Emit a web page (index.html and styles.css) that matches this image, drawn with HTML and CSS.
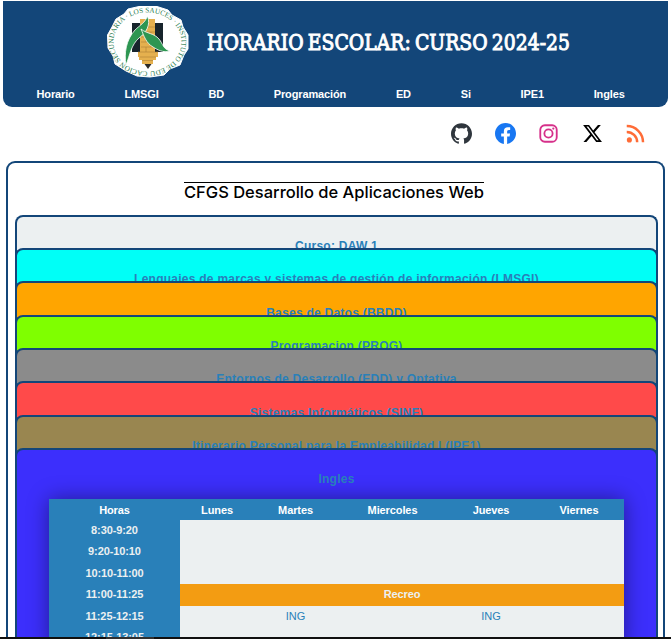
FILE: index.html
```html
<!DOCTYPE html>
<html lang="es">
<head>
<meta charset="utf-8">
<title>Horario escolar</title>
<link rel="stylesheet" href="styles.css">
</head>
<body>
<header class="header">
  <div class="brand">
    <svg class="logo" viewBox="106 5 84 73" width="84" height="73">
      <defs>
        <path id="ring" d="M147.5 71.5 A34 29.5 0 0 1 147.5 12.5 A34 29.5 0 0 1 147.5 71.5"/>
      </defs>
      <path d="M128 9 L139 6.5 L157 6.5 L168 10 L172 15 L181 20 L183 27 L188 35 L188 49 L184 55 L180 65 L170 69 L164 75 L150 77 L137 76 L126 71 L115 64 L113 56 L108 48 L107.500 35 L112 27 L116 19 L124 14Z" fill="#fff" stroke="#fff" stroke-linejoin="round"/>
      <text class="ring-text"><textPath href="#ring" startOffset="0" textLength="197" lengthAdjust="spacingAndGlyphs">CACION SECUNDARIA · LOS SAUCES · INSTITUTO DE EDU</textPath></text>
      <path d="M132 23h8v29h-8zM155 23h8v29h-8z" fill="#17242c"/>
      <path d="M140 19h15v33h3v5h-20v-5h2zM139 57h17v3h-17zM142 60h11v4h-11z" fill="#e5b04e"/>
      <path d="M141 27h14M141 32h14M141 37h14M141 42h14M141 47h14M138 52h20M140 57h16M142 60.500h11M148 19v8M145 27v5M151 32v5M146 37v5M151 42v5M146 47v5" stroke="#ad8236" stroke-width=".6" fill="none"/>
      <path d="M144.500 64h7l-3.500 5z" fill="#2b2926"/>
      <path d="M147.500 16C151 25 146 33 139 38C131 45 130 55 126 65C124 53 126 40 135 30C140 25 145 23 147.500 16Z" fill="#2d9652" stroke="#fff" stroke-width=".8"/>
      <path d="M141 29C147 34 154 33 159 39C163 44 163 49 170 51C163 53 158 50 153 47C146 43 144 36 141 29Z" fill="#2d9652" stroke="#fff" stroke-width=".8"/>
    </svg>
    <h1 class="title"><svg width="366" height="28"><text x="2" y="20" textLength="363" lengthAdjust="spacingAndGlyphs">HORARIO ESCOLAR: CURSO 2024-25</text></svg></h1>
  </div>
  <nav class="nav"><a>Horario</a><a>LMSGI</a><a>BD</a><a>Programación</a><a>ED</a><a>Si</a><a>IPE1</a><a>Ingles</a></nav>
</header>
<div class="social">
  <svg viewBox="0 0 24 24" fill="#2f363d"><path d="M12 .297c-6.630 0-12 5.373-12 12 0 5.303 3.438 9.800 8.205 11.385.6.113.820-.258.820-.577 0-.285-.010-1.040-.015-2.040-3.338.724-4.042-1.610-4.042-1.610C4.422 18.070 3.633 17.700 3.633 17.700c-1.087-.744.084-.729.084-.729 1.205.084 1.838 1.236 1.838 1.236 1.070 1.835 2.809 1.305 3.495.998.108-.776.417-1.305.760-1.605-2.665-.3-5.466-1.332-5.466-5.930 0-1.310.465-2.380 1.235-3.220-.135-.303-.540-1.523.105-3.176 0 0 1.005-.322 3.300 1.230.960-.267 1.980-.399 3-.405 1.020.006 2.040.138 3 .405 2.280-1.552 3.285-1.230 3.285-1.230.645 1.653.240 2.873.120 3.176.765.840 1.230 1.910 1.230 3.220 0 4.610-2.805 5.625-5.475 5.920.420.360.810 1.096.810 2.220 0 1.606-.015 2.896-.015 3.286 0 .315.210.690.825.570C20.565 22.092 24 17.592 24 12.297c0-6.627-5.373-12-12-12"/></svg>
  <svg viewBox="0 0 24 24" fill="#1877f2"><path d="M24 12.073c0-6.627-5.373-12-12-12s-12 5.373-12 12c0 5.990 4.388 10.954 10.125 11.854v-8.385H7.078v-3.470h3.047V9.430c0-3.007 1.792-4.669 4.533-4.669 1.312 0 2.686.235 2.686.235v2.953H15.830c-1.491 0-1.956.925-1.956 1.874v2.250h3.328l-.532 3.470h-2.796v8.385C19.612 23.027 24 18.062 24 12.073z"/></svg>
  <svg viewBox="0 0 24 24" fill="none" stroke="#d6308a" stroke-width="2.100"><rect x="2.600" y="2.600" width="18.800" height="18.800" rx="5.200"/><circle cx="12" cy="12" r="4.700"/><circle cx="17.500" cy="6.400" r="1.300" fill="#d6308a" stroke="none"/></svg>
  <svg viewBox="0 0 24 24" fill="#000"><path d="M18.244 2.250h3.308l-7.227 8.260 8.502 11.240H16.170l-5.214-6.817L4.990 21.750H1.680l7.730-8.835L1.254 2.250H8.080l4.713 6.231zm-1.161 17.520h1.833L7.084 4.126H5.117z"/></svg>
  <svg viewBox="0 0 24 24" fill="none" stroke="#ff6c37" stroke-width="2.800"><circle cx="5" cy="19.300" r="2.900" fill="#ff6c37" stroke="none"/><path d="M2 10.200A11.800 11.800 0 0 1 13.900 22M2 3.500A18.500 18.500 0 0 1 20.600 22"/></svg>
</div>
<main class="main">
  <h2 class="subtitle"><svg width="302" height="22"><text x="0" y="15" textLength="300" lengthAdjust="spacingAndGlyphs">CFGS Desarrollo de Aplicaciones Web</text></svg></h2>
  <section class="card grey-light"><h3>Curso: DAW 1</h3></section>
  <section class="card cyan"><h3>Lenguajes de marcas y sistemas de gestión de información (LMSGI)</h3></section>
  <section class="card orange"><h3>Bases de Datos (BBDD)</h3></section>
  <section class="card green"><h3>Programacion (PROG)</h3></section>
  <section class="card grey"><h3>Entornos de Desarrollo (EDD) y Optativa</h3></section>
  <section class="card red"><h3>Sistemas Informáticos (SINF)</h3></section>
  <section class="card brown"><h3>Itinerario Personal para la Empleabilidad I (IPE1)</h3></section>
  <section class="card blue">
    <h3>Ingles</h3>
    <div class="schedule">
      <div class="row head"><b>Horas</b><b>Lunes</b><b>Martes</b><b>Miercoles</b><b>Jueves</b><b>Viernes</b></div>
      <div class="row"><b>8:30-9:20</b></div>
      <div class="row"><b>9:20-10:10</b></div>
      <div class="row"><b>10:10-11:00</b></div>
      <div class="row"><b>11:00-11:25</b><b class="break">Recreo</b></div>
      <div class="row"><b>11:25-12:15</b><span></span><span>ING</span><span></span><span>ING</span><span></span></div>
      <div class="row"><b>12:15-13:05</b></div>
    </div>
  </section>
</main>
<footer class="edge"><i></i></footer>
</body>
</html>
```
FILE: styles.css
```css
* { box-sizing: border-box; }
body {
  margin: 0;
  height: 639px;
  overflow: hidden;
  display: flex;
  flex-direction: column;
  background: #fff;
  font-family: "Liberation Sans", Arial, sans-serif;
  font-size: 11px;
}
h1, h2, h3 { margin: 0; font-weight: normal; }
h1 svg, h2 svg { display: block; overflow: visible; }
.header {
  flex: none;
  height: 106px;
  margin: 1px 3px 0;
  background: #134679;
  border-radius: 0 0 9px 9px;
  color: #fff;
}
.brand { display: flex; padding: 4px 0 0 103px; height: 86px; }
.logo { flex: none; }
.ring-text {
  font: 7.2px "Liberation Serif", serif;
  fill: #277b4d;
}
.title { margin: 25px 0 0 15px; height: 28px; }
.title text {
  font: 21.5px "DejaVu Serif", serif;
  word-spacing: -2px;
  fill: #fff;
  stroke: #fff;
  stroke-width: 1px;
}
.nav {
  display: flex;
  gap: 49.8px;
  padding-left: 33.5px;
  line-height: 14px;
  font-weight: bold;
  letter-spacing: -.14px;
  white-space: nowrap;
}
.social {
  flex: none;
  display: flex;
  justify-content: flex-end;
  gap: 22.5px;
  padding: 15.5px 25px 0 0;
  height: 54px;
}
.social svg { width: 21px; height: 21px; }
.main {
  flex: 1;
  min-height: 0;
  margin: 0 6px;
  padding: 0 5px 0 7px;
  border: 2px solid #134679;
  border-bottom: 0;
  border-radius: 9px 9px 0 0;
  overflow: hidden;
}
.subtitle {
  width: 300px;
  height: 32.75px;
  margin: 19px 0 0 169px;
  border-top: 1px solid #000;
}
.subtitle text {
  font: 500 16.5px "Inter", sans-serif;
  fill: #000;
}
.card {
  position: relative;
  height: 60px;
  margin-bottom: -26.7px;
  padding-top: 21.4px;
  border: 2px solid #134679;
  border-bottom: 0;
  border-radius: 8px 8px 0 0;
  text-align: center;
}
.card h3 {
  color: #2980b9;
  font-size: 12px;
  font-weight: bold;
  line-height: 16px;
  letter-spacing: .25px;
  white-space: nowrap;
}
.grey-light { background: #ecf0f1; }
.cyan { background: #00fff7; }
.orange { background: #ffa500; }
.green { background: #7fff00; }
.grey { background: #8b8b8b; }
.red { background: #ff4a4a; }
.brown { background: #998650; }
.blue { background: #3c2ffc; height: 300px; }
.schedule {
  width: 575px;
  margin: 11.700px 0 0 32px;
  background: linear-gradient(to right, #2980b9 131px, #ecf0f1 131px);
  box-shadow: 0 0 20px rgba(0, 0, 0, .42);
  color: #2980b9;
}
.row {
  display: grid;
  grid-template-columns: 131px 74px 83px 111px 86px 90px;
  height: 21.400px;
  line-height: 21.4px;
}
.row b { color: #ecf0f1; letter-spacing: -.1px; }
.row.head { background: #2980b9; height: 21px; line-height: 22px; }
.row.head b { color: #fff; }
.row .break { grid-column: 2 / 7; background: #f39c12; }
.edge { flex: none; height: 2px; background: #101010; padding-left: 106px; }
.edge i { display: block; width: 48px; height: 2px; background: #303030; }
```
